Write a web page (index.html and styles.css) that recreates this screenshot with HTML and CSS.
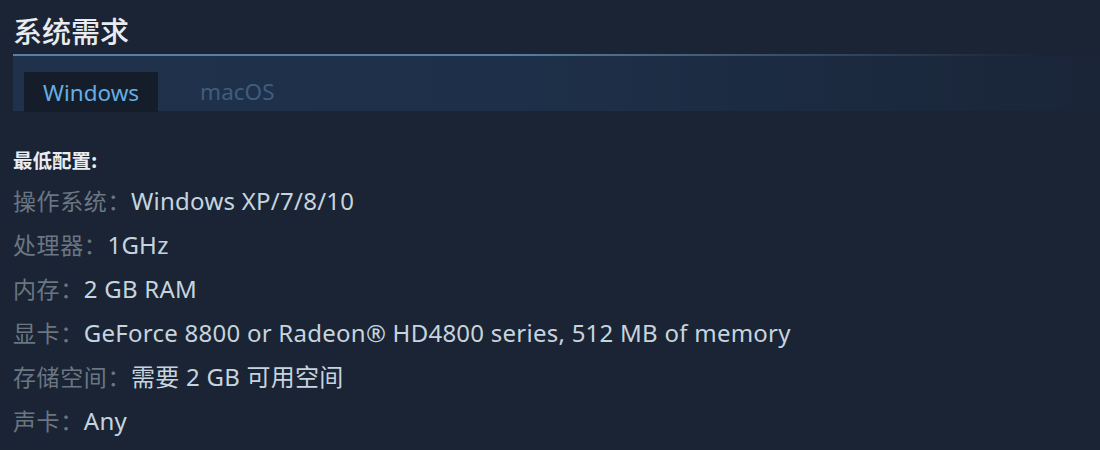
FILE: index.html
```html
<!DOCTYPE html>
<html lang="zh-CN">
<head>
<meta charset="utf-8">
<title>系统需求</title>
<link rel="stylesheet" href="styles.css">
</head>
<body>
<div class="page">
  <h2 class="title">系统需求</h2>
  <div class="rule"></div>
  <div class="tabs">
    <div class="tab active">Windows</div>
    <div class="tab">macOS</div>
  </div>
  <div class="reqs">
    <div class="reqs-head">最低配置:</div>
    <ul class="list">
      <li><span class="label">操作系统：</span><span class="value">Windows XP/7/8/10</span></li>
      <li><span class="label">处理器：</span><span class="value">1GHz</span></li>
      <li><span class="label">内存：</span><span class="value">2 GB RAM</span></li>
      <li><span class="label">显卡：</span><span class="value">GeForce 8800 or Radeon® HD4800 series, 512 MB of memory</span></li>
      <li><span class="label">存储空间：</span><span class="value">需要 2 GB 可用空间</span></li>
      <li><span class="label">声卡：</span><span class="value">Any</span></li>
    </ul>
  </div>
</div>
</body>
</html>
```
FILE: styles.css
```css
html, body {
  margin: 0;
  padding: 0;
  background: #1a2435;
  height: 100%;
}
body {
  font-family: "Noto Sans", "Noto Sans CJK SC", sans-serif;
  color: #c6d4df;
  overflow: hidden;
}
.page {
  padding-left: 13px;
}
.title {
  margin: 0;
  padding-top: 13px;
  font-family: "Noto Sans CJK SC", sans-serif;
  font-size: 29px;
  line-height: 34px;
  font-weight: 500;
  color: #e8ebef;
}
.rule {
  margin-top: 7px;
  height: 2px;
  background: linear-gradient(90deg, #5a7ea2 0%, #5a7ea2 45%, rgba(90,126,162,0.4) 75%, rgba(90,126,162,0) 95%);
}
.tabs {
  display: flex;
  align-items: flex-end;
  gap: 23px;
  height: 55px;
  padding-left: 11px;
  background: linear-gradient(90deg, #1f314b 0%, #1e3049 45%, #1b2a40 75%, #1a2538 100%);
}
.tab {
  height: 39px;
  padding: 0 19px;
  display: flex;
  align-items: center;
  font-size: 22.5px;
  color: #3f5d7c;
  box-sizing: border-box;
}
.tab.active {
  background: #151d2a;
  color: #63afe3;
  margin-bottom: -1px;
  height: 40px;
}
.reqs {
  padding-top: 37px;
}
.reqs-head {
  font-family: "Noto Sans CJK SC", sans-serif;
  font-size: 19.5px;
  line-height: 24px;
  font-weight: 700;
  color: #e8ecf0;
  margin-bottom: 6px;
}
.list {
  list-style: none;
  margin: 0;
  padding: 0;
}
.list li {
  height: 44px;
  line-height: 44px;
  font-size: 24px;
  white-space: nowrap;
}
.label {
  color: #6a7682;
  font-family: "Noto Sans CJK SC", sans-serif;
  font-size: 23px;
  letter-spacing: 0.6px;
}
.value {
  color: #c6d4df;
  letter-spacing: 0.25px;
}
```
